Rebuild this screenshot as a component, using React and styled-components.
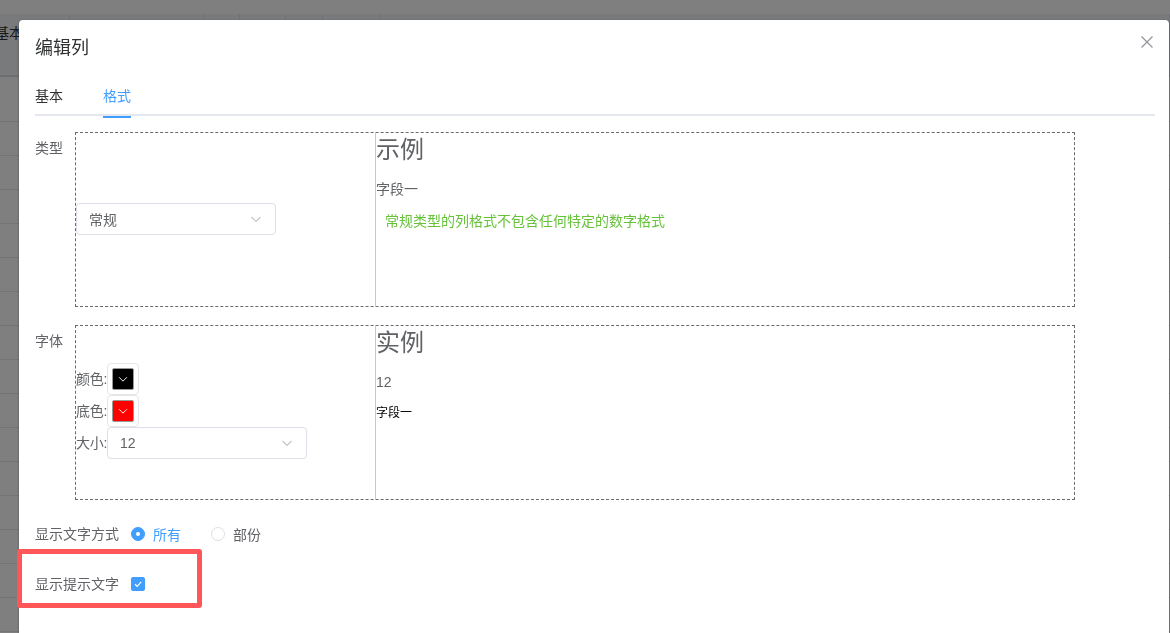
import React from "react";
import styled, { createGlobalStyle } from "styled-components";

const GlobalStyle = createGlobalStyle`
  html, body {
    margin: 0;
    padding: 0;
    background: #fff;
    font-family: "Helvetica Neue", "Liberation Sans", "Noto Sans CJK SC", sans-serif;
    font-size: 14px;
    color: #606266;
  }
  * { box-sizing: border-box; }
`;

/* ---------- page under the dialog ---------- */

const Underlay = styled.div`
  width: 1170px;
  height: 633px;
  overflow: hidden;
  background: #fff;
`;

const HeadBand = styled.div`
  margin-top: 14px;
  height: 63px;
  display: flex;
  background: #f2f4f7;
  border-bottom: 2px solid #d9dce3;
`;

const HeadCell = styled.div`
  width: ${(p) => p.w}px;
  flex: none;
  border-right: 1px solid #e2e4ea;
  padding-top: 8px;
  font-size: 14px;
  color: #303133;
  text-indent: ${(p) => p.indent || 0}px;
  white-space: nowrap;
  overflow: hidden;
`;

const BodyRow = styled.div`
  height: ${(p) => p.h}px;
  border-bottom: 1px solid #e6e8ee;
`;

const Overlay = styled.div`
  position: fixed;
  inset: 0;
  background: rgba(0, 0, 0, 0.5);
  overflow: hidden;
`;

/* ---------- dialog ---------- */

const Dialog = styled.div`
  position: relative;
  margin: 20px 0 0 19px;
  width: 1150px;
  height: 640px;
  background: #fff;
  border-radius: 4px 4px 0 0;
  box-shadow: 0 1px 3px rgba(0, 0, 0, 0.3);
  padding: 16px 16px 0;
`;

const Title = styled.div`
  font-size: 18px;
  line-height: 24px;
  color: #303133;
`;

const CloseBtn = styled.button`
  position: absolute;
  top: 15px;
  right: 15px;
  width: 14px;
  height: 14px;
  padding: 0;
  border: 0;
  background: none;
  color: #909399;
  cursor: pointer;
  display: flex;
`;

const TabsNav = styled.div`
  margin-top: 16px;
  margin-right: -2px;
  height: 40px;
  display: flex;
  border-bottom: 2px solid #e4e7ed;
  margin-bottom: 16px;
`;

const Tab = styled.div`
  position: relative;
  height: 40px;
  line-height: 40px;
  padding: 0 20px;
  font-size: 14px;
  color: ${(p) => (p.active ? "#409eff" : "#303133")};
  &:first-child { padding-left: 0; }
  &:last-child { padding-right: 0; }
  &::after {
    content: "";
    display: ${(p) => (p.active ? "block" : "none")};
    position: absolute;
    left: 20px;
    right: 0;
    bottom: -2px;
    height: 2px;
    background: #409eff;
  }
`;

const FormItem = styled.div`
  position: relative;
  display: flex;
  align-items: flex-start;
  margin-bottom: 18px;
`;

const Label = styled.label`
  flex: none;
  line-height: 32px;
  padding-right: 12px;
  font-size: 14px;
  color: #606266;
  white-space: nowrap;
`;

const PreviewBox = styled.div`
  width: 1000px;
  height: 175px;
  border: 1px dashed #6a6a6a;
  display: grid;
  grid-template-columns: 299px 1fr;
`;

const SettingCell = styled.div`
  display: flex;
  flex-direction: column;
  justify-content: center;
  align-items: flex-start;
  padding-bottom: ${(p) => p.lift || 0}px;
`;

const SampleCell = styled.div`
  border-left: 1px solid #c8c8c8;
  padding-top: 1px;
`;

const SampleHead = styled.div`
  font-size: 24px;
  line-height: 32px;
  color: #606266;
`;

const SampleLine = styled.div`
  margin-top: ${(p) => p.mt || 0}px;
  padding-left: ${(p) => p.indent || 0}px;
  font-size: ${(p) => p.size || 14}px;
  line-height: 20px;
  color: ${(p) => p.color || "#606266"};
`;

const Select = styled.div`
  width: 200px;
  height: 32px;
  border: 1px solid #dcdfe6;
  border-radius: 4px;
  padding: 0 12px;
  display: flex;
  align-items: center;
  justify-content: space-between;
  font-size: 14px;
  color: #606266;
  background: #fff;
`;

const FieldLine = styled.div`
  display: flex;
  align-items: center;
  height: 32px;
`;

const FieldLabel = styled.span`
  font-size: 14px;
  line-height: 20px;
  color: #606266;
  letter-spacing: -0.3px;
`;

const Picker = styled.div`
  width: 32px;
  height: 32px;
  border: 1px solid #e6e6e6;
  border-radius: 4px;
  padding: 4px;
`;

const Swatch = styled.div`
  width: 100%;
  height: 100%;
  border: 1px solid #999;
  border-radius: 2px;
  background: ${(p) => p.color};
  display: flex;
  align-items: center;
  justify-content: center;
  color: #fff;
`;

const RadioGroup = styled.div`
  display: flex;
  align-items: center;
  height: 32px;
`;

const Radio = styled.label`
  display: flex;
  align-items: center;
  margin-right: 30px;
  font-size: 14px;
  color: ${(p) => (p.checked ? "#409eff" : "#606266")};
`;

const RadioDot = styled.span`
  width: 14px;
  height: 14px;
  border-radius: 50%;
  border: 1px solid ${(p) => (p.checked ? "#409eff" : "#dcdfe6")};
  background: ${(p) => (p.checked ? "#409eff" : "#fff")};
  margin-right: 8px;
  display: flex;
  align-items: center;
  justify-content: center;
  &::after {
    content: "";
    width: 4px;
    height: 4px;
    border-radius: 50%;
    background: #fff;
  }
`;

const CheckWrap = styled.div`
  height: 32px;
  display: flex;
  align-items: center;
`;

const CheckBox = styled.span`
  width: 14px;
  height: 14px;
  border-radius: 2px;
  background: #409eff;
  border: 1px solid #409eff;
  display: flex;
  align-items: center;
  justify-content: center;
  color: #fff;
`;

const Highlight = styled.div`
  position: absolute;
  top: -19px;
  left: -18px;
  width: 185px;
  height: 59px;
  border: 5px solid #ff5757;
  border-radius: 3px;
  pointer-events: none;
`;

const Chevron = ({ color = "#c0c4cc", size = 14 }) => (
  <svg width={size} height={size} viewBox="0 0 14 14" fill="none">
    <path d="M2.5 5 L7 9.5 L11.5 5" stroke={color} strokeWidth="1.1" />
  </svg>
);

const headCols = [70, 134, 36, 46, 37, 57, 790];

export default function App() {
  return (
    <>
      <GlobalStyle />
      <Underlay>
        <HeadBand>
          {headCols.map((w, i) => (
            <HeadCell key={i} w={w} indent={i === 0 ? -5 : 0}>
              {i === 0 ? "基本" : ""}
            </HeadCell>
          ))}
        </HeadBand>
        <BodyRow h={45} />
        {Array.from({ length: 15 }).map((_, i) => (
          <BodyRow key={i} h={34} />
        ))}
      </Underlay>

      <Overlay>
        <Dialog>
          <Title>编辑列</Title>
          <CloseBtn aria-label="关闭">
            <svg width="14" height="14" viewBox="0 0 14 14">
              <path d="M1.5 1.5 L12.5 12.5 M12.5 1.5 L1.5 12.5" stroke="currentColor" strokeWidth="1.2" />
            </svg>
          </CloseBtn>

          <TabsNav>
            <Tab>基本</Tab>
            <Tab active>格式</Tab>
          </TabsNav>

          <FormItem>
            <Label>类型</Label>
            <PreviewBox>
              <SettingCell lift={2}>
                <Select>
                  <span>常规</span>
                  <Chevron />
                </Select>
              </SettingCell>
              <SampleCell>
                <SampleHead>示例</SampleHead>
                <SampleLine mt={13}>字段一</SampleLine>
                <SampleLine mt={12} indent={9} color="#67c23a">
                  常规类型的列格式不包含任何特定的数字格式
                </SampleLine>
              </SampleCell>
            </PreviewBox>
          </FormItem>

          <FormItem>
            <Label>字体</Label>
            <PreviewBox>
              <SettingCell lift={4}>
                <FieldLine>
                  <FieldLabel>颜色:</FieldLabel>
                  <Picker>
                    <Swatch color="#000">
                      <Chevron color="#fff" size={12} />
                    </Swatch>
                  </Picker>
                </FieldLine>
                <FieldLine>
                  <FieldLabel>底色:</FieldLabel>
                  <Picker>
                    <Swatch color="#ff0000">
                      <Chevron color="#fff" size={12} />
                    </Swatch>
                  </Picker>
                </FieldLine>
                <FieldLine>
                  <FieldLabel>大小:</FieldLabel>
                  <Select>
                    <span>12</span>
                    <Chevron />
                  </Select>
                </FieldLine>
              </SettingCell>
              <SampleCell>
                <SampleHead>实例</SampleHead>
                <SampleLine mt={13}>12</SampleLine>
                <SampleLine mt={11} size={12} color="#000">
                  字段一
                </SampleLine>
              </SampleCell>
            </PreviewBox>
          </FormItem>

          <FormItem>
            <Label>显示文字方式</Label>
            <RadioGroup>
              <Radio checked>
                <RadioDot checked />
                所有
              </Radio>
              <Radio>
                <RadioDot />
                部份
              </Radio>
            </RadioGroup>
          </FormItem>

          <FormItem>
            <Label>显示提示文字</Label>
            <CheckWrap>
              <CheckBox>
                <svg width="10" height="10" viewBox="0 0 10 10" fill="none">
                  <path d="M2 5.2 L4.2 7.3 L8.2 2.8" stroke="#fff" strokeWidth="1.2" />
                </svg>
              </CheckBox>
            </CheckWrap>
            <Highlight />
          </FormItem>
        </Dialog>
      </Overlay>
    </>
  );
}
